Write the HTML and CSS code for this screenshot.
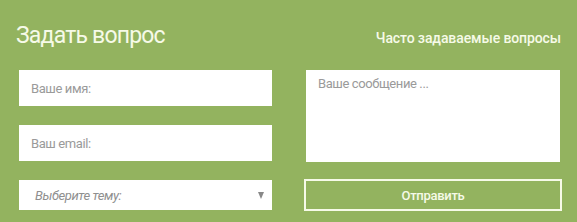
FILE: index.html
```html
<!DOCTYPE html>
<html lang="ru">
<head>
<meta charset="utf-8">
<link rel="stylesheet" href="styles.css">
</head>
<body>
<div class="page">
  <div class="header">
    <h1 class="title">Задать вопрос</h1>
    <a class="faq" href="#">Часто задаваемые вопросы</a>
  </div>
  <form class="form">
    <div class="col-left">
      <input class="field" type="text" placeholder="Ваше имя:">
      <input class="field" type="text" placeholder="Ваш email:">
      <div class="select">
        <span class="select-text">Выберите тему:</span>
        <span class="arrow"></span>
      </div>
    </div>
    <div class="col-right">
      <textarea class="message" placeholder="Ваше сообщение ..."></textarea>
      <button class="submit" type="button">Отправить</button>
    </div>
  </form>
</div>
</body>
</html>
```

FILE: styles.css
```css
html, body {
  margin: 0;
  padding: 0;
  background: #93b35f;
  width: 577px;
  height: 222px;
  overflow: hidden;
}
.page {
  font-family: Roboto, "Liberation Sans", sans-serif;
  color: #f6fae8;
}
.header {
  display: flex;
  justify-content: space-between;
  align-items: baseline;
  padding: 22px 16px 0 16px;
  height: 48px;
  box-sizing: border-box;
}
.title {
  margin: 0;
  font-size: 23px;
  font-weight: 400;
  letter-spacing: -0.8px;
  line-height: 28px;
}
.faq {
  color: #f6fae8;
  text-decoration: none;
  font-size: 14px;
  font-weight: 500;
  letter-spacing: -0.1px;
}
.form {
  display: flex;
  margin-top: 22px;
  padding-left: 19px;
  gap: 32px;
}
.col-left {
  width: 253px;
  display: flex;
  flex-direction: column;
  gap: 19px;
}
.field {
  height: 36px;
  border: none;
  outline: none;
  padding: 0 12px;
  margin: 0;
  font-family: inherit;
  font-size: 13px;
  letter-spacing: -0.4px;
  background: #fff;
  box-sizing: border-box;
  width: 100%;
}
.field::placeholder { color: #9a9a9a; }
.select {
  height: 30px;
  background: #fff;
  display: flex;
  align-items: center;
  justify-content: space-between;
  padding: 0 8px 0 16px;
  box-sizing: border-box;
}
.select-text {
  font-style: italic;
  font-size: 13px;
  letter-spacing: -0.4px;
  color: #8f8f8f;
}
.arrow {
  width: 0;
  height: 0;
  border-left: 3.5px solid transparent;
  border-right: 3.5px solid transparent;
  border-top: 7px solid #888;
}
.col-right {
  width: 258px;
  display: flex;
  flex-direction: column;
  gap: 17px;
}
.message {
  height: 92px;
  width: 254px;
  margin: 0 2px;
  border: none;
  outline: none;
  resize: none;
  padding: 6px 12px;
  box-sizing: border-box;
  font-family: inherit;
  font-size: 13px;
  letter-spacing: -0.4px;
  background: #fff;
}
.message::placeholder { color: #9a9a9a; }
.submit {
  height: 32px;
  width: 258px;
  margin: 0;
  background: transparent;
  border: 2px solid #f6fae8;
  color: #f6fae8;
  font-family: inherit;
  font-size: 13px;
  font-weight: 500;
  letter-spacing: -0.3px;
  padding: 0;
  cursor: pointer;
}
```
